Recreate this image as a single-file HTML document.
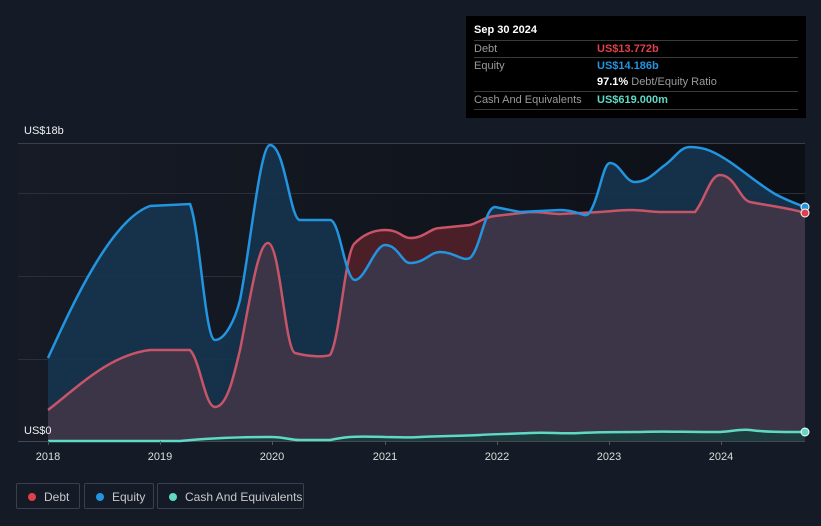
<!DOCTYPE html>
<html><head><style>
body{margin:0;width:821px;height:526px;background:#151b26;font-family:"Liberation Sans",sans-serif;overflow:hidden;position:relative}
.tip{position:absolute;left:466px;top:16px;width:340px;height:102px;background:#000;color:#fff;font-size:11px}
.tip .r{position:absolute;left:8px;width:324px;border-top:1px solid #3a3a3a;height:16px;line-height:16px;color:#9a9a9a}
.tip .v{position:absolute;left:123px;font-weight:bold}
.leg{position:absolute;top:483px;height:26px;border:1px solid #3a404c;border-radius:2px;color:#c8c8c8;font-size:12px;line-height:26px;box-sizing:border-box}
.dot{display:inline-block;width:8px;height:8px;border-radius:50%;margin:0 8px 0 11px;vertical-align:-0px}
.yr{position:absolute;top:451px;color:#ddd;font-size:11px;transform:translateX(-50%)}
</style></head><body>
<svg width="821" height="526" style="position:absolute;left:0;top:0">
<defs>
<linearGradient id="bg" x1="0" x2="1"><stop offset="0" stop-color="#161b26"/><stop offset="1" stop-color="#0c0f15"/></linearGradient>
<clipPath id="eq"><path id="eqa" d="M48,358 C70,310 110,220 150,206 L190,204 C200,230 205,340 215,340 C225,340 235,320 240,300 C250,250 260,145 270,145 C285,145 290,220 300,220 L330,220 C340,220 345,280 355,280 C365,280 375,245 385,245 C398,245 402,263 410,263 C425,263 430,252 440,252 C455,252 462,262 470,258 C480,250 485,207 495,207 L520,212 L560,210 C580,210 585,220 590,212 C600,195 603,163 610,163 C620,163 625,182 635,182 C648,182 655,172 665,165 C675,158 680,147 690,147 C705,147 715,152 730,162 C750,176 760,185 775,194 C790,202 800,205 805,207 L805,441 L48,441 Z"/></clipPath>
</defs>
<rect x="18" y="143" width="787" height="298" fill="url(#bg)"/>
<g stroke="#3a3f4a" stroke-width="1"><line x1="18" y1="143.5" x2="805" y2="143.5"/><line x1="18" y1="193.5" x2="805" y2="193.5" stroke="#2a2f3a"/><line x1="18" y1="276.5" x2="805" y2="276.5" stroke="#2a2f3a"/><line x1="18" y1="359.5" x2="805" y2="359.5" stroke="#2a2f3a"/><line x1="18" y1="441.5" x2="805" y2="441.5" stroke="#444a55"/></g>
<use href="#eqa" fill="#16344f" opacity="0.9"/>
<path id="dba" d="M48,410 C80,385 110,355 150,350 L190,350 C200,360 205,407 215,407 C228,407 235,370 240,350 C250,300 258,243 268,243 C280,243 285,350 295,353 C310,357 325,357 330,355 C340,340 345,250 355,243 C365,233 375,230 385,230 C400,230 402,238 410,238 C425,238 430,228 440,228 L470,225 C480,222 485,217 495,216 L530,212 C545,212 550,214 560,214 L600,212 C615,211 620,210 630,210 C645,210 650,212 660,212 L695,212 C705,200 710,175 720,175 C735,175 740,200 750,202 C770,206 790,208 805,213 L805,441 L48,441 Z" fill="#4a1f28"/>
<path d="M48,410 C80,385 110,355 150,350 L190,350 C200,360 205,407 215,407 C228,407 235,370 240,350 C250,300 258,243 268,243 C280,243 285,350 295,353 C310,357 325,357 330,355 C340,340 345,250 355,243 C365,233 375,230 385,230 C400,230 402,238 410,238 C425,238 430,228 440,228 L470,225 C480,222 485,217 495,216 L530,212 C545,212 550,214 560,214 L600,212 C615,211 620,210 630,210 C645,210 650,212 660,212 L695,212 C705,200 710,175 720,175 C735,175 740,200 750,202 C770,206 790,208 805,213 L805,441 L48,441 Z" fill="#3b3547" clip-path="url(#eq)"/>
<path d="M48,441 L180,441 C200,439 230,437 270,437 C285,437 290,440 300,440 L330,440 C345,437 350,436 385,437 C400,437 410,438 420,437 C440,436 460,436 480,435 C495,434 510,434 530,433 C550,432 560,434 580,433 C600,432 620,432 640,432 C660,431 680,432 720,432 C735,431 740,429 750,430 C765,432 780,432 805,432 L805,441 Z" fill="#1d3a3c"/>
<path d="M48,410 C80,385 110,355 150,350 L190,350 C200,360 205,407 215,407 C228,407 235,370 240,350 C250,300 258,243 268,243 C280,243 285,350 295,353 C310,357 325,357 330,355 C340,340 345,250 355,243 C365,233 375,230 385,230 C400,230 402,238 410,238 C425,238 430,228 440,228 L470,225 C480,222 485,217 495,216 L530,212 C545,212 550,214 560,214 L600,212 C615,211 620,210 630,210 C645,210 650,212 660,212 L695,212 C705,200 710,175 720,175 C735,175 740,200 750,202 C770,206 790,208 805,213" fill="none" stroke="#c85468" stroke-width="2.5"/>
<path d="M48,358 C70,310 110,220 150,206 L190,204 C200,230 205,340 215,340 C225,340 235,320 240,300 C250,250 260,145 270,145 C285,145 290,220 300,220 L330,220 C340,220 345,280 355,280 C365,280 375,245 385,245 C398,245 402,263 410,263 C425,263 430,252 440,252 C455,252 462,262 470,258 C480,250 485,207 495,207 L520,212 L560,210 C580,210 585,220 590,212 C600,195 603,163 610,163 C620,163 625,182 635,182 C648,182 655,172 665,165 C675,158 680,147 690,147 C705,147 715,152 730,162 C750,176 760,185 775,194 C790,202 800,205 805,207" fill="none" stroke="#2394e0" stroke-width="2.5"/>
<path d="M48,441 L180,441 C200,439 230,437 270,437 C285,437 290,440 300,440 L330,440 C345,437 350,436 385,437 C400,437 410,438 420,437 C440,436 460,436 480,435 C495,434 510,434 530,433 C550,432 560,434 580,433 C600,432 620,432 640,432 C660,431 680,432 720,432 C735,431 740,429 750,430 C765,432 780,432 805,432" fill="none" stroke="#5fd8c4" stroke-width="2.5"/>
<circle cx="805" cy="207" r="4" fill="#2394e0" stroke="#fff" stroke-width="1"/>
<circle cx="805" cy="213" r="4" fill="#e0404a" stroke="#fff" stroke-width="1"/>
<circle cx="805" cy="432" r="4" fill="#5fd8c4" stroke="#fff" stroke-width="1"/>
<g stroke="#555" stroke-width="1"><line x1="48.5" y1="441" x2="48.5" y2="445"/><line x1="160.5" y1="441" x2="160.5" y2="445"/><line x1="272.5" y1="441" x2="272.5" y2="445"/><line x1="385.5" y1="441" x2="385.5" y2="445"/><line x1="497.5" y1="441" x2="497.5" y2="445"/><line x1="609.5" y1="441" x2="609.5" y2="445"/><line x1="721.5" y1="441" x2="721.5" y2="445"/></g>
</svg>
<div style="position:absolute;left:24px;top:125px;color:#eee;font-size:11px">US$18b</div>
<div style="position:absolute;left:24px;top:425px;color:#eee;font-size:11px">US$0</div>
<div class="yr" style="left:48px">2018</div><div class="yr" style="left:160px">2019</div><div class="yr" style="left:272px">2020</div><div class="yr" style="left:385px">2021</div><div class="yr" style="left:497px">2022</div><div class="yr" style="left:609px">2023</div><div class="yr" style="left:721px">2024</div>
<div class="tip">
<div style="position:absolute;left:8px;top:8px;font-weight:bold">Sep 30 2024</div>
<div class="r" style="top:24px">Debt<span class="v" style="color:#e0404a">US$13.772b</span></div>
<div class="r" style="top:41px">Equity<span class="v" style="color:#2394e0">US$14.186b</span></div>
<div class="r" style="top:58px;border-top:none"><span class="v" style="color:#fff">97.1% <span style="color:#9a9a9a;font-weight:normal">Debt/Equity Ratio</span></span></div>
<div class="r" style="top:75px">Cash And Equivalents<span class="v" style="color:#5fd8c4">US$619.000m</span></div>
<div class="r" style="top:93px;height:0"></div>
</div>
<div class="leg" style="left:16px;width:64px"><span class="dot" style="background:#e0404a"></span>Debt</div>
<div class="leg" style="left:84px;width:70px"><span class="dot" style="background:#2394e0"></span>Equity</div>
<div class="leg" style="left:157px;width:147px"><span class="dot" style="background:#5fd8c4"></span>Cash And Equivalents</div>
</body></html>
